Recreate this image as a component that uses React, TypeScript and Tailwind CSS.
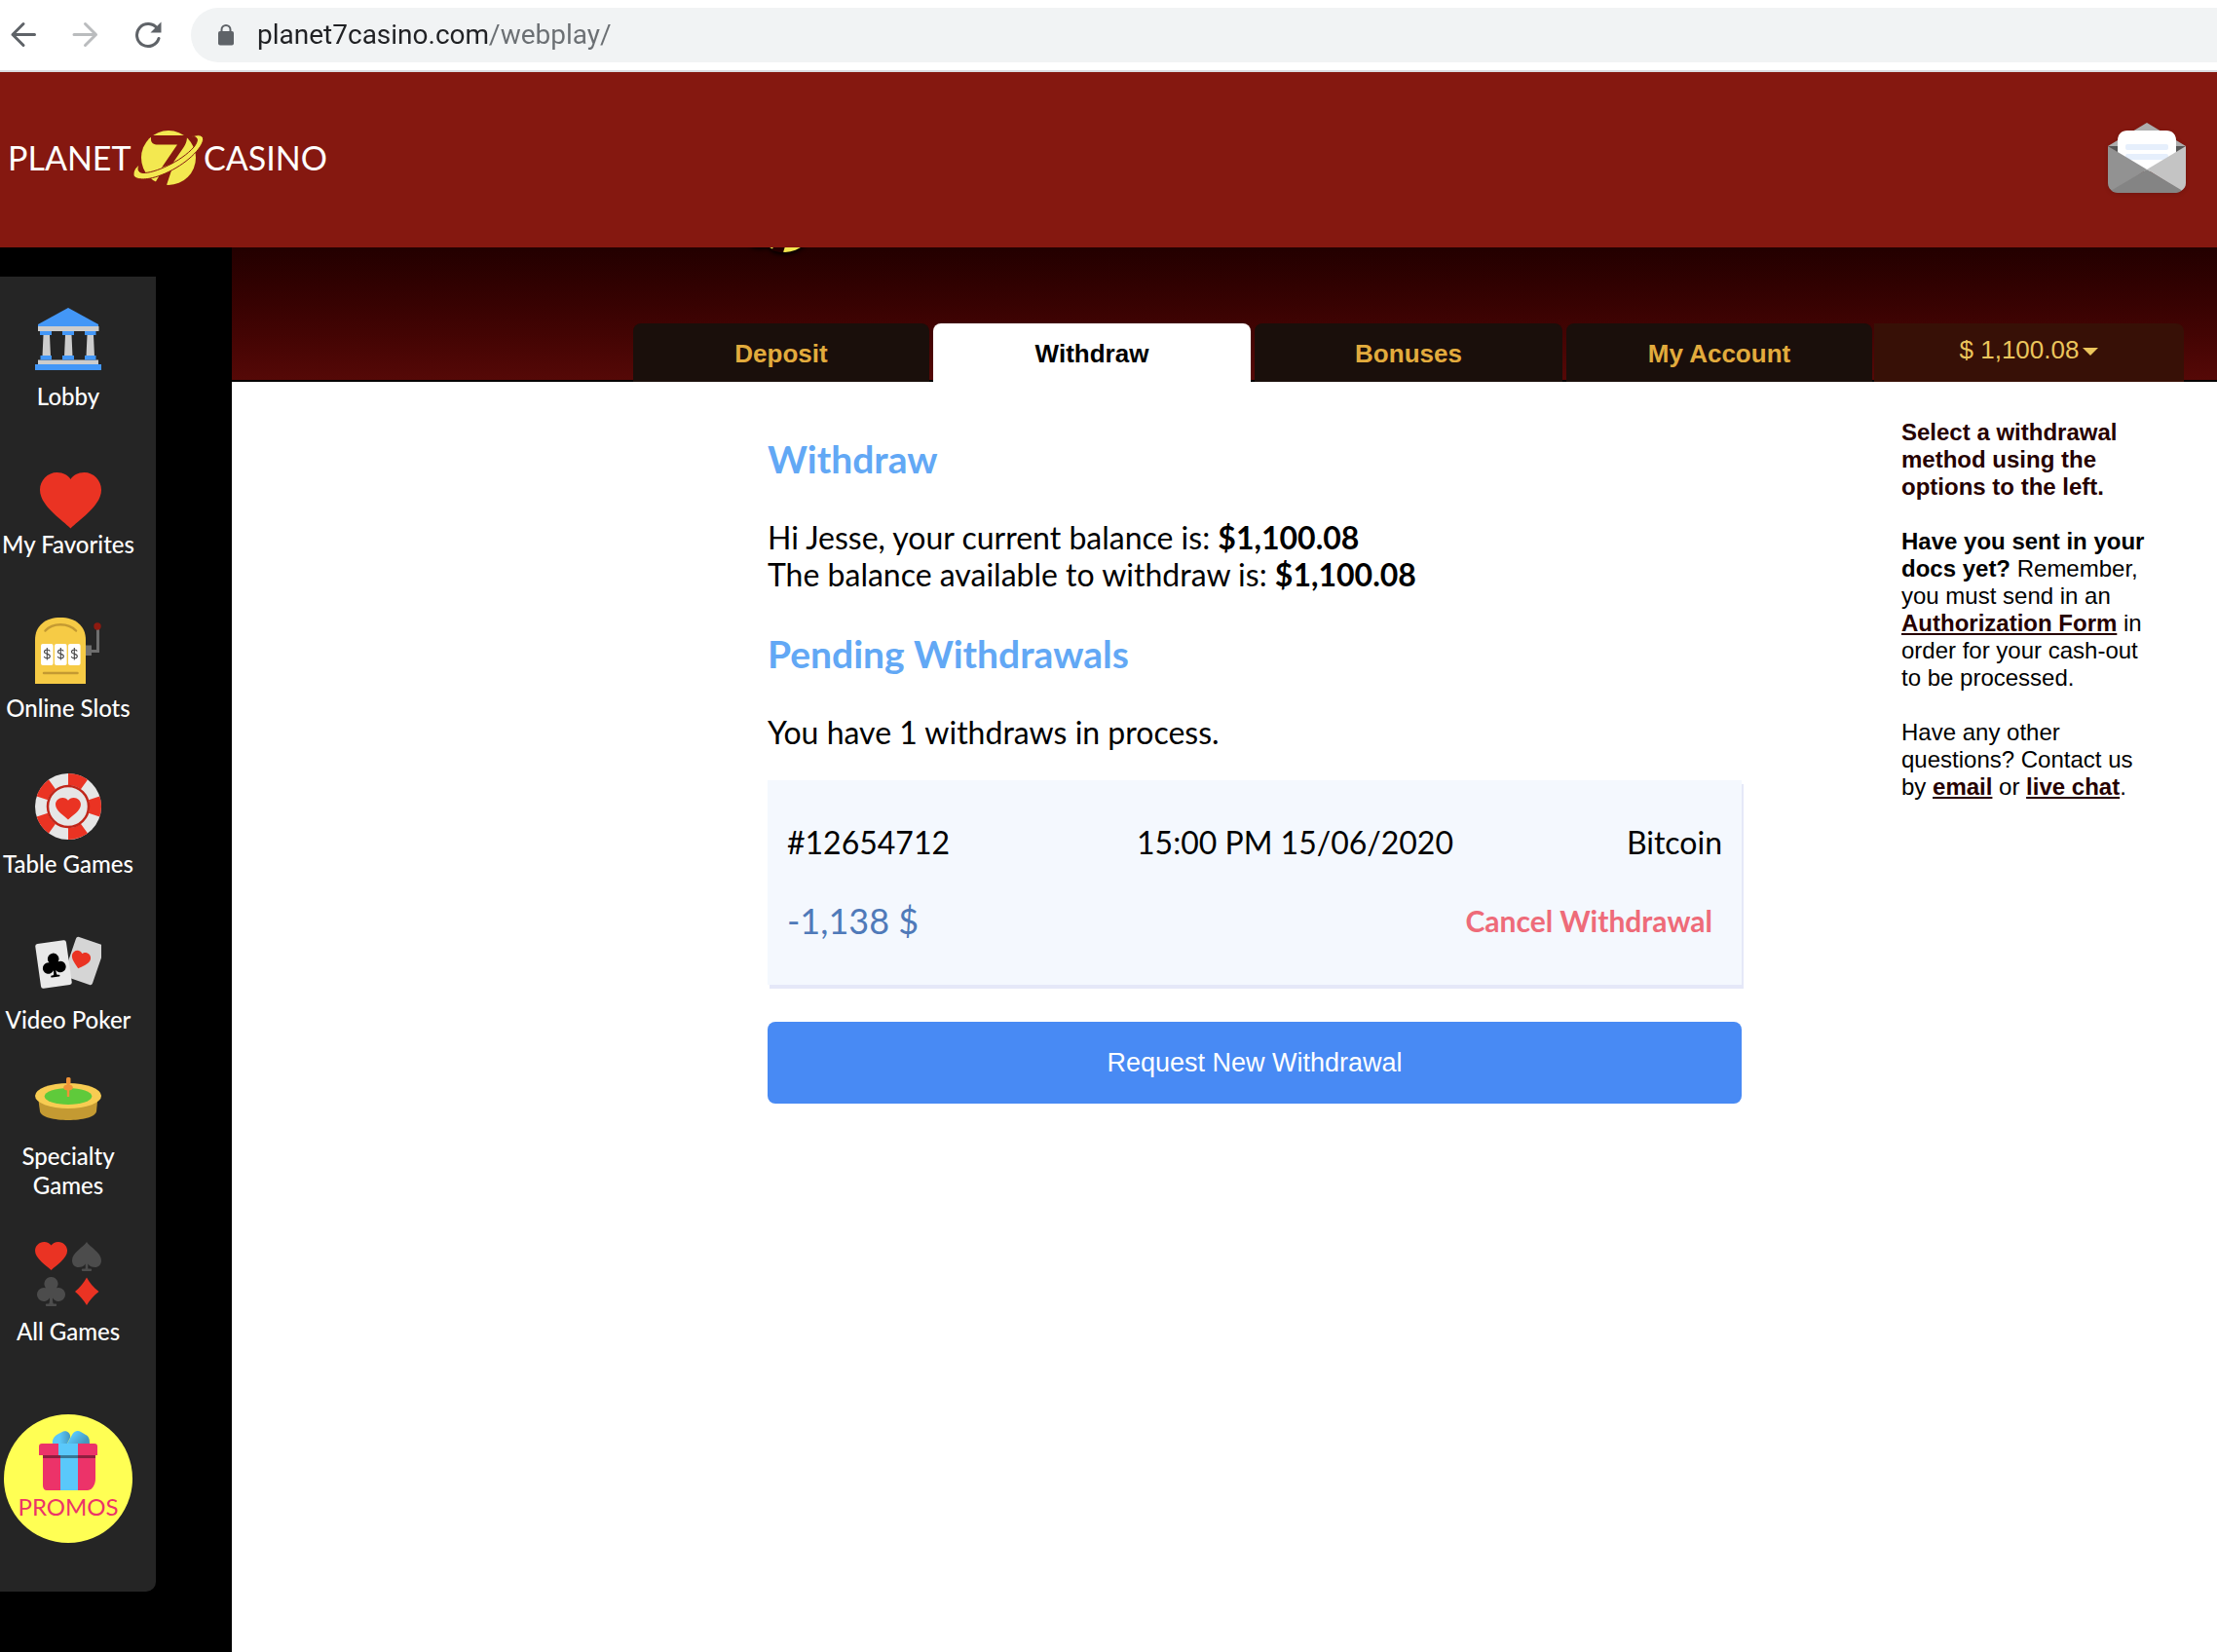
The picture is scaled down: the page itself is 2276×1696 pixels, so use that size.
import { ReactNode, useState } from "react";

const HEART =
  "M31.5 57.5C22 48 0 34 0 18C0 8 8 0 17.5 0C24 0 29 3 31.5 7C34 3 39 0 45.5 0C55 0 63 8 63 18C63 34 41 48 31.5 57.5Z";
const CLUB =
  "M13.5 0a7 7 0 0 1 5.6 11.2A7 7 0 1 1 15 21.5C15 25 15.3 27 16 27.6H18a1.2 1.2 0 0 1 0 2.4H9a1.2 1.2 0 0 1 0-2.4h2C11.700 27 12 25 12 21.500A7 7 0 1 1 7.900 11.200A7 7 0 0 1 13.500 0Z";
const SPADE =
  "M15 0C18 5 30 11 30 19C30 23.500 27 26 23.500 26C20.500 26 17.500 25 16.300 22.500V27.600H19a1.200 1.200 0 0 1 0 2.400H11a1.200 1.200 0 0 1 0-2.400H13.700V22.500C12.500 25 9.500 26 6.500 26C3 26 0 23.500 0 19C0 11 12 5 15 0Z";

function LogoMark({ ground }: { ground: string }) {
  return (
    <svg width="72" height="56" viewBox="0 0 72 56" className="shrink-0" aria-hidden="true">
      <circle cx="36" cy="28" r="28" fill="#f3e850" />
      <path d="M18 5H55C55 10 54.500 13 51 18L40 34L29 38L45 14.500H25C21 14.500 18 13 18 9Z" fill={ground} />
      <path d="M28 44L40 38L34 56H30L22 54Z" fill={ground} />
      <path
        d="M58 7C66 3 74 4 71 12C66 24 46 40 25 47C10 52 0 50 0 45C0 41 2 38 6 35C4 40 5 43 10 43.500C21 44 49 32 62 17C66 12 67 7 62 6.500Z"
        fill="#f3e850"
        stroke={ground}
        strokeWidth="1"
      />
    </svg>
  );
}

function LobbyIcon() {
  return (
    <svg width="68" height="68" viewBox="0 0 68 68">
      <path d="M34 2L65 19V21H3V19Z" fill="#4397f7" />
      <path d="M3 21H65.500V26H3ZM3 55.500H65V60H3Z" fill="#ccc" />
      <path d="M8.500 30H15L16 52H7.500ZM31 30H37.500L38.500 52H30ZM53.500 30H60L61 52H52.500Z" fill="#ccc" />
      <path
        d="M5 26H17V30H5ZM28 26H40V30H28ZM51 26H62.500V30H51ZM5.500 51H17V55.500H5.500ZM28 51H40V55.500H28ZM51 51H62.500V55.500H51ZM0 60H68V66H0Z"
        fill="#4397f7"
      />
    </svg>
  );
}

function FavoritesIcon() {
  return (
    <svg width="68" height="70" viewBox="0 0 68 70">
      <path d={HEART} transform="translate(5 11)" fill="#ea3323" />
    </svg>
  );
}

function SlotsIcon() {
  return (
    <svg width="68" height="68" viewBox="0 0 68 68">
      <path d="M0 68V23C0 8 11 0 26 0C41 0 52 8 52 23V68Z" fill="#f6cb45" />
      <path d="M10.500 13.500C18 5 34 5 42 13.500" fill="none" stroke="#c49a32" strokeWidth="2.500" strokeLinecap="round" />
      <path d="M9 57H43.500" stroke="#c49a32" strokeWidth="2.500" strokeLinecap="round" />
      {[6, 20, 34].map((x) => (
        <g key={x} transform={`translate(${x} 27)`}>
          <rect width="12.600" height="22" rx="2" fill="#fff" />
          <path
            d="M6.300 4V16.500M9.200 7.500C8.500 5.500 3.700 5.300 3.500 8.100C3.300 11 9.500 9.800 9.300 12.700C9 15.700 4 15.200 3.200 12.800"
            fill="none"
            stroke="#444"
            strokeWidth="1.100"
          />
        </g>
      ))}
      <path d="M52 28.500H58V33H63V12H66V36H58V39H52Z" fill="#6e6e6e" />
      <circle cx="64" cy="9" r="3.700" fill="#8e1a10" />
    </svg>
  );
}

function TableIcon() {
  return (
    <svg width="68" height="68" viewBox="0 0 68 68">
      <circle cx="34" cy="34" r="34" fill="#e6e6e6" />
      <circle
        cx="34"
        cy="34"
        r="28"
        fill="none"
        stroke="#ea3323"
        strokeWidth="12"
        pathLength="10"
        strokeDasharray="1 1"
        transform="rotate(-90 34 34)"
      />
      <circle cx="34" cy="34" r="21" fill="#e6e6e6" stroke="#c0261a" strokeWidth="2.500" />
      <path d={HEART} transform="translate(21 25) scale(0.412 0.390)" fill="#ea3323" />
    </svg>
  );
}

function PokerIcon() {
  return (
    <svg width="68" height="68" viewBox="0 0 68 68">
      <rect x="-15.500" y="-21.500" width="31" height="43" rx="2.500" transform="translate(50.500 32.500) rotate(19)" fill="#d5d5d5" />
      <path d={HEART} transform="translate(39.500 20.500) rotate(15) scale(0.310)" fill="#ea3323" />
      <rect x="-16" y="-23" width="32" height="46" rx="2.500" transform="translate(19 36) rotate(-8)" fill="#e9e9e9" />
      <path d={CLUB} transform="translate(7 26) rotate(-7) scale(0.820)" fill="#000" />
    </svg>
  );
}

function SpecialtyIcon() {
  return (
    <svg width="68" height="68" viewBox="0 0 68 68">
      <path d="M3 32H64.500L63 47C61 59 7 59 5 47Z" fill="#c49a32" />
      <ellipse cx="34" cy="31" rx="34" ry="13" fill="#f8cc52" />
      <ellipse cx="34" cy="31.500" rx="24.300" ry="8.500" fill="#5fca3b" />
      <rect x="32" y="12" width="4.500" height="7.500" rx="1.500" fill="#f09337" />
      <ellipse cx="34" cy="22.500" rx="4.800" ry="3" fill="#f09337" />
      <path d="M32.800 19H35.200V32H32.800Z" fill="#f09337" />
    </svg>
  );
}

function AllGamesIcon() {
  return (
    <svg width="68" height="68" viewBox="0 0 68 68">
      <path d={HEART} transform="translate(0 1) scale(0.525 0.505)" fill="#ea3323" />
      <path d={SPADE} transform="translate(38 1)" fill="#4c4c4c" />
      <path d={CLUB} transform="translate(3 37)" fill="#4c4c4c" />
      <path d="M53 37.500C56 43 60 48 65.500 52C60 56 56 61 53 66C50 61 46 56 41 52C46 48 50 43 53 37.500Z" fill="#ea3323" />
    </svg>
  );
}

function GiftIcon() {
  return (
    <svg width="60" height="61" viewBox="0 0 60 61">
      <defs>
        <linearGradient id="bowLeft" x1="0" y1="0" x2="1" y2="0">
          <stop offset="0.400" stopColor="#5ac8fa" />
          <stop offset="1" stopColor="#4597bd" />
        </linearGradient>
        <linearGradient id="bowRight" x1="0" y1="0" x2="1" y2="0.500">
          <stop offset="0.300" stopColor="#5ac8fa" />
          <stop offset="1" stopColor="#4597bd" />
        </linearGradient>
      </defs>
      <path d="M14 13C13 9 16 5 20 3L25 0.500C29 -1 33 3 32 7L29 13Z" fill="url(#bowLeft)" />
      <path d="M29 13L34 4C36 0 40 -1 43 1L48 4C52 6 52 10 52 13Z" fill="url(#bowRight)" />
      <path d="M4 25H58V49C58 56 54 61 50 61H8C5.500 61 4 59 4 56Z" fill="#ec3369" />
      <path d="M22 25H40V61H22Z" fill="#5ac8fa" />
      <path d="M4 25H58V28H4Z" fill="#000" opacity="0.400" />
      <path d="M3 13H57C59 13 60 14 60 16V25H0V16C0 14 1 13 3 13Z" fill="#ec3369" />
      <path d="M20 13H40V25H20Z" fill="#5ac8fa" />
    </svg>
  );
}

function MailIcon() {
  return (
    <svg width="80" height="72" viewBox="0 0 80 72" className="drop-shadow-sm">
      <path d="M40 0L80 24H0Z" fill="#adadad" />
      <path d="M0 24H80L62 36H18Z" fill="#565656" />
      <path d="M10 50V18C10 12 14 8 20 8H60C66 8 70 12 70 18V50Z" fill="#fff" />
      <rect x="18" y="22" width="44" height="6" rx="2" fill="#e6effc" />
      <rect x="18" y="32" width="44" height="6" rx="2" fill="#e6effc" />
      <path d="M0 24L40 48L6 71C2 69 0 66 0 62Z" fill="#929292" />
      <path d="M80 24L40 48L75 70C78 68 80 66 80 62Z" fill="#c4c4c4" />
      <path d="M40 48L76 69.500C74 71 72 72 70 72H10C7 72 5 71 3.500 69.500Z" fill="#848484" />
    </svg>
  );
}

interface GameLink {
  label: string;
  icon: ReactNode;
  className: string;
}

const games: GameLink[] = [
  { label: "Lobby", icon: <LobbyIcon />, className: "gap-[10px]" },
  { label: "My Favorites", icon: <FavoritesIcon />, className: "mt-[52px]" },
  { label: "Online Slots", icon: <SlotsIcon />, className: "mt-[60px] gap-[10px]" },
  { label: "Table Games", icon: <TableIcon />, className: "mt-[52px] gap-[10px]" },
  { label: "Video Poker", icon: <PokerIcon />, className: "mt-[52px] gap-[10px]" },
  { label: "Specialty Games", icon: <SpecialtyIcon />, className: "mt-[32px] gap-[10px] px-4" },
  { label: "All Games", icon: <AllGamesIcon />, className: "mt-[42px] gap-[10px]" },
];

const tabs = [
  { label: "Deposit", width: "w-[304px]" },
  { label: "Withdraw", width: "w-[326px]" },
  { label: "Bonuses", width: "w-[316px]" },
  { label: "My Account", width: "w-[314px]" },
];

function BrowserBar() {
  return (
    <div className="flex h-[74px] items-center border-b-2 border-[#dadce0] bg-white pl-2">
      <button type="button" aria-label="Back" className="p-[2px]">
        <svg width="28" height="28" viewBox="0 0 28 28" fill="none" stroke="#5f6368" strokeWidth="3" strokeLinecap="round" strokeLinejoin="round">
          <path d="M25.500 13.500H3M14 2.500L3 13.500L14 24.500" />
        </svg>
      </button>
      <button type="button" aria-label="Forward" className="ml-8 p-[2px]">
        <svg width="28" height="28" viewBox="0 0 28 28" fill="none" stroke="#babcbe" strokeWidth="3" strokeLinecap="round" strokeLinejoin="round">
          <path d="M2 13.500H24.500M13.500 2.500L24.500 13.500L13.500 24.500" />
        </svg>
      </button>
      <button type="button" aria-label="Reload" className="ml-8 p-[2px]">
        <svg width="28" height="28" viewBox="0 0 28 28">
          <path d="M23.500 7.500A11.500 11.500 0 1 0 25 17.500" fill="none" stroke="#5f6368" strokeWidth="3" strokeLinecap="round" />
          <path d="M27.500 0.500V11.500H16.500Z" fill="#5f6368" />
        </svg>
      </button>
      <div className="ml-[28px] flex h-14 flex-1 items-center rounded-l-full bg-[#f1f3f4] pl-7">
        <svg width="16" height="22" viewBox="0 0 16 22" className="shrink-0">
          <path d="M3.500 9V5.500A4.500 4.500 0 0 1 12.500 5.500V9" fill="none" stroke="#5f6368" strokeWidth="2" />
          <rect y="7" width="16" height="14.500" rx="2" fill="#5f6368" />
        </svg>
        {/* host is dark, path is grey */}
        <input
          type="text"
          aria-label="Address"
          defaultValue="planet7casino.com/webplay/"
          className="ml-6 h-10 flex-1 bg-[linear-gradient(90deg,#202124_239px,#6b6f73_239px)] bg-clip-text font-['Roboto',sans-serif] text-[28px] text-transparent outline-none"
        />
      </div>
    </div>
  );
}

function Sidebar() {
  return (
    <aside className="w-[238px] shrink-0 bg-black pt-[30px]">
      <nav className="mr-[78px] flex flex-col rounded-br-[10px] bg-[#252525] pt-[30px] pr-5 pb-[50px] font-['Lato',sans-serif]">
        {games.map((game) => (
          <a
            key={game.label}
            href="#"
            className={`flex flex-col items-center text-center text-[24px] leading-[30px] font-medium text-white ${game.className}`}
          >
            {game.icon}
            <span>{game.label}</span>
          </a>
        ))}
        <a
          href="#"
          className="mx-auto mt-[70px] flex size-[132px] flex-col items-center gap-[2px] rounded-full bg-[#ffff54] pt-[17px] text-[24px] leading-[30px] text-[#ec3369]"
        >
          <GiftIcon />
          <span>PROMOS</span>
        </a>
      </nav>
    </aside>
  );
}

function PendingWithdrawal() {
  return (
    <article className="mt-[30px] flex h-[210px] flex-col justify-between bg-[#f4f8fe] px-5 pt-[44px] pb-[44px] shadow-[2px_4px_0_#e5e8f8]">
      <div className="grid grid-cols-[1fr_auto_1fr] text-[32px] leading-[40px]">
        <span>#12654712</span>
        <span className="ml-[83px]">15:00 PM 15/06/2020</span>
        <span className="text-right">Bitcoin</span>
      </div>
      <div className="flex items-center justify-between">
        <span className="text-[36px] leading-[44px] text-[#4f7ab9]">-1,138 $</span>
        <button type="button" className="mr-[10px] text-[30px] leading-[40px] font-bold text-[#ee6b79]">
          Cancel Withdrawal
        </button>
      </div>
    </article>
  );
}

export default function App() {
  const [activeTab, setActiveTab] = useState("Withdraw");

  return (
    <div className="flex min-h-screen flex-col bg-white text-black">
      <BrowserBar />

      <header className="flex h-[180px] items-center justify-between bg-[#851810] pr-8 pb-1 pl-2">
        <a href="#" aria-label="Planet 7 Casino" className="flex items-center font-['Lato',sans-serif] text-[34px] leading-[40px] text-white">
          <span className="w-[129px]">PLANET</span>
          <LogoMark ground="#851810" />
          <span>CASINO</span>
        </a>
        <button type="button" aria-label="Messages">
          <MailIcon />
        </button>
      </header>

      <div className="flex flex-1">
        <Sidebar />

        <div className="flex-1 font-['Liberation_Sans',Arial,sans-serif]">
          <div className="relative flex h-[138px] items-end justify-end overflow-hidden bg-linear-to-b from-[#230000] to-[#560907] pr-[34px] shadow-[inset_0_-2px_0_#000]">
            <div className="absolute -top-[51px] left-[532px] drop-shadow-[0_2px_2px_#000]">
              <LogoMark ground="#230000" />
            </div>
            <nav className="flex gap-1">
              {tabs.map((tab) => (
                <button
                  key={tab.label}
                  type="button"
                  onClick={() => setActiveTab(tab.label)}
                  className={`h-[60px] rounded-t-[8px] pt-[2px] text-[26px] font-bold ${tab.width} ${
                    activeTab === tab.label ? "bg-white text-black" : "bg-[#1a0f0b] text-[#e2ab3d]"
                  }`}
                >
                  {tab.label}
                </button>
              ))}
            </nav>
            <button
              type="button"
              className="ml-[2px] flex h-[60px] w-[318px] items-center justify-center gap-1 rounded-tr-[8px] bg-[#371006] pb-[6px] text-[26px] text-[#ebc55c]"
            >
              $ 1,100.08
              <svg width="16" height="8" viewBox="0 0 16 8" className="mt-1">
                <path d="M0 0H16L8 8Z" fill="#ebc55c" />
              </svg>
            </button>
          </div>

          <main className="flex justify-end pr-[68px]">
            <section className="mt-[56px] w-full max-w-[1001px] pr-px font-['Lato',sans-serif] text-[32px] leading-[38px]">
              <h1 className="text-[39px] leading-[46px] font-bold text-[#62a8f5]">Withdraw</h1>
              <p className="mt-[39px]">
                Hi Jesse, your current balance is: <b>$1,100.08</b>
                <br />
                The balance available to withdraw is: <b>$1,100.08</b>
              </p>
              <h2 className="mt-[39px] text-[39px] leading-[46px] font-bold text-[#62a8f5]">Pending Withdrawals</h2>
              <p className="mt-[39px]">You have 1 withdraws in process.</p>
              <PendingWithdrawal />
              <button
                type="button"
                className="mt-[38px] h-[84px] w-full rounded-[8px] bg-[#488af4] font-['Liberation_Sans',Arial,sans-serif] text-[27px] text-white"
              >
                Request New Withdrawal
              </button>
            </section>

            <aside className="mt-[38px] ml-[163px] w-64 shrink-0 text-[24px] leading-[28px]">
              <p className="font-bold text-[#260000]">Select a withdrawal method using the options to the left.</p>
              <p className="mt-7">
                <b>Have you sent in your docs yet?</b> Remember, you must send in an{" "}
                <a href="#" className="font-bold text-[#260000] underline">Authorization Form</a> in order for your
                cash-out to be processed.
              </p>
              <p className="mt-7">
                Have any other questions? Contact us by{" "}
                <a href="#" className="font-bold text-[#260000] underline">email</a> or{" "}
                <a href="#" className="font-bold text-[#260000] underline">live chat</a>.
              </p>
            </aside>
          </main>
        </div>
      </div>
    </div>
  );
}
